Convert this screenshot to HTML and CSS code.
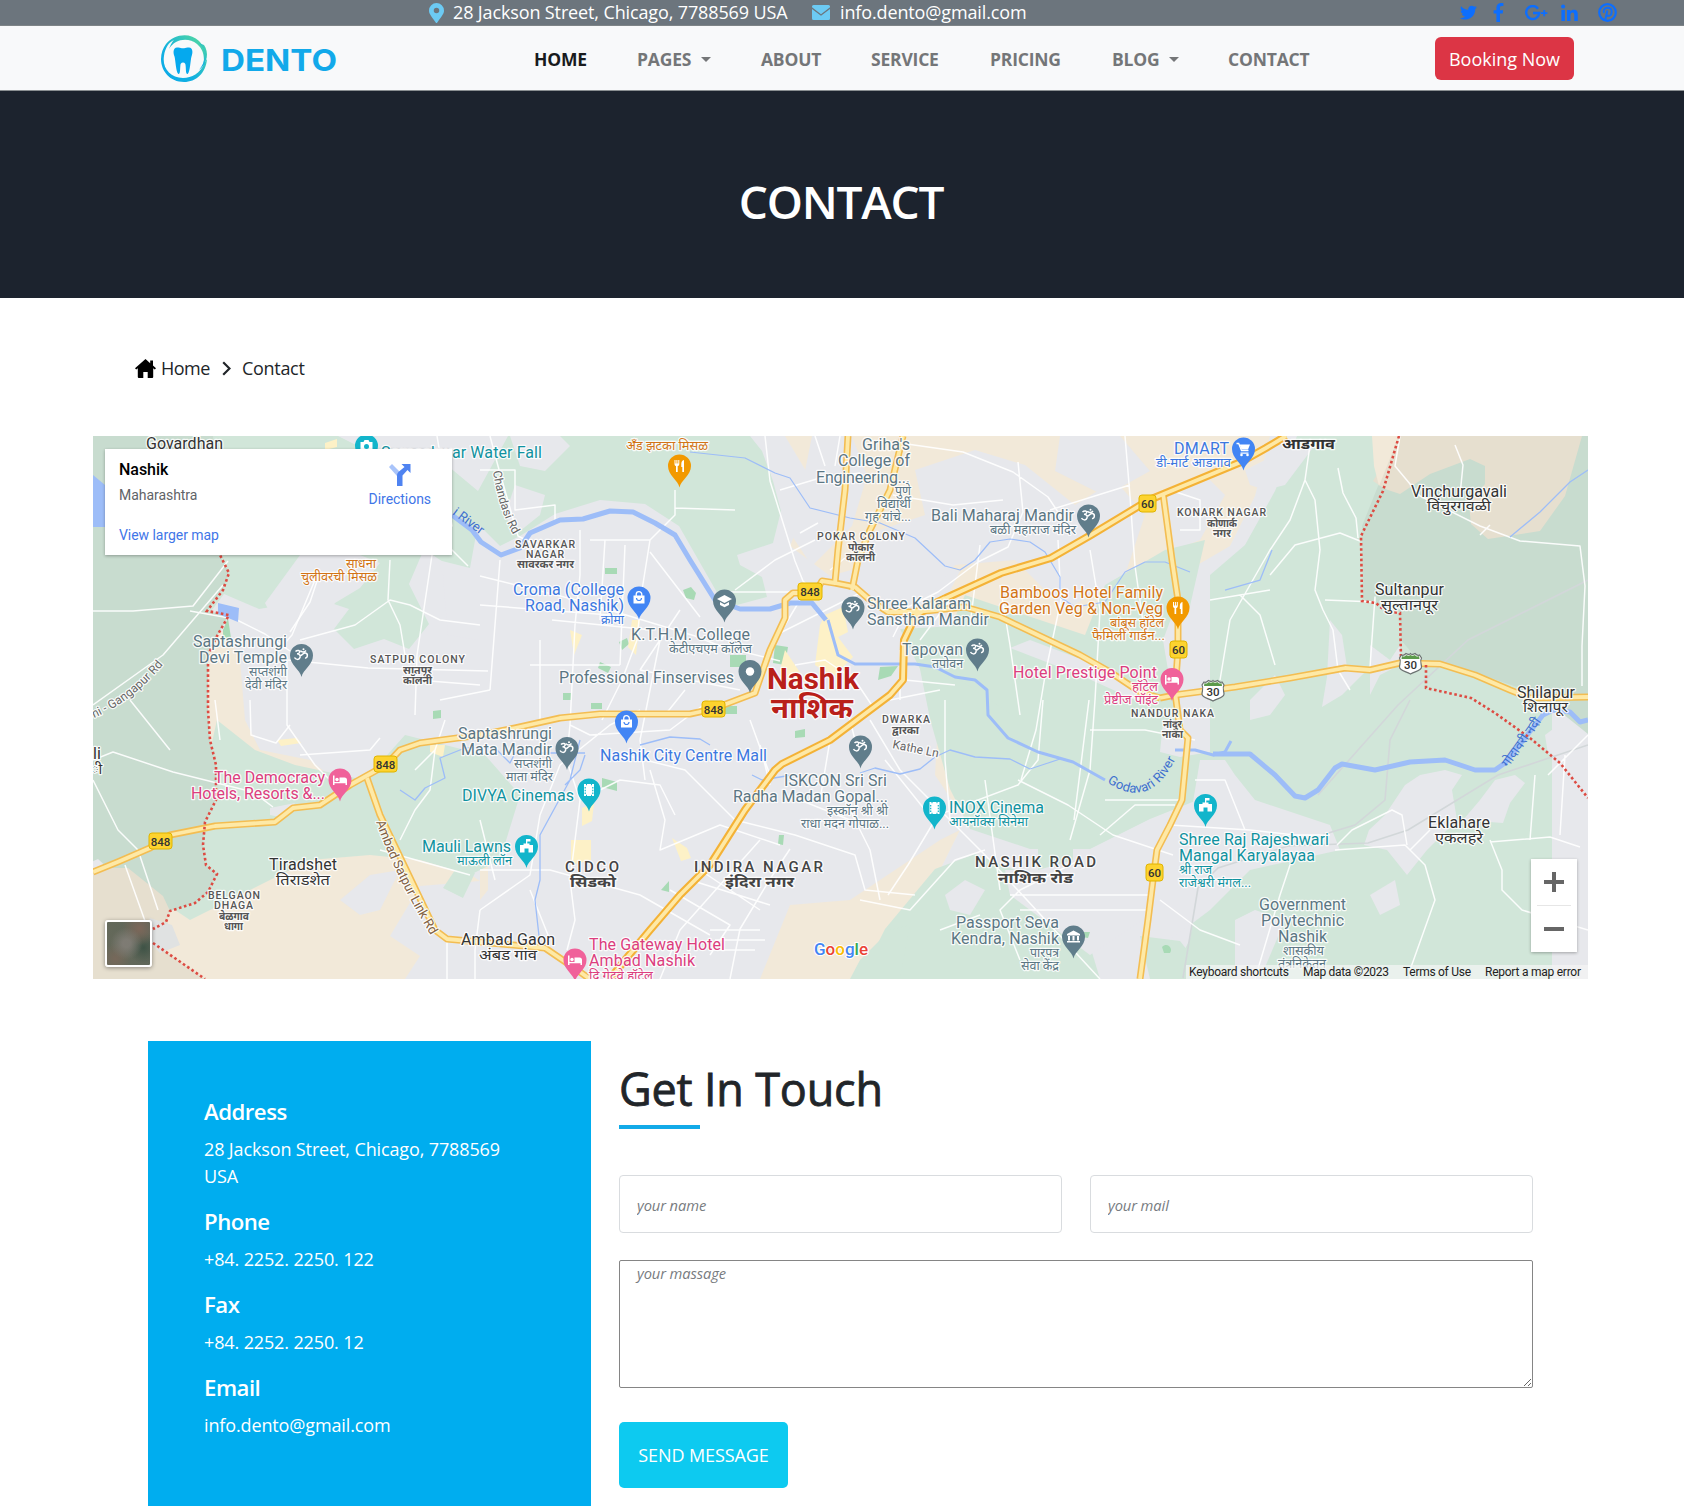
FILE: index.html
```html
<!DOCTYPE html>
<html lang="en">
<head>
<meta charset="utf-8">
<title>Dento - Contact</title>
<link rel="stylesheet" href="styles.css">
</head>
<body>
<header>
  <div class="topbar">
    <div class="topbar-info">
      <svg class="ico-pin" viewBox="0 0 384 512"><path d="M172 502C27 291 0 270 0 192a192 192 0 0 1 384 0c0 78-27 99-172 310a24 24 0 0 1-40 0zM192 262a70 70 0 1 0 0-140 70 70 0 0 0 0 140z"/></svg>
      <span class="addr">28 Jackson Street, Chicago, 7788569 USA</span>
      <svg class="ico-mail" viewBox="0 0 18 15"><path d="M1.500 0h15A1.500 1.500 0 0 1 18 1.500v.8L9 9.200 0 2.300v-.8A1.500 1.500 0 0 1 1.500 0zM0 4l9 6.800L18 4v9.500a1.500 1.500 0 0 1-1.500 1.500h-15A1.500 1.500 0 0 1 0 13.500z"/></svg>
      <span class="mail">info.dento@gmail.com</span>
    </div>
    <div class="social">
      <svg width="17" height="17" viewBox="0 0 512 512"><path d="M459 152c0 5 0 9 0 14 0 139-106 299-299 299-59 0-115-17-161-47 8 1 16 1 25 1 49 0 94-17 130-45-46-1-85-31-98-73 6 1 13 2 20 2 9 0 19-1 28-4-48-10-84-52-84-103v-1c14 8 30 13 47 13-28-19-47-51-47-87 0-19 5-37 14-53 52 64 129 105 216 110-2-8-3-16-3-24 0-58 47-105 105-105 30 0 57 13 77 33 24-5 46-13 67-25-8 24-24 45-46 58 21-2 42-8 60-16-14 21-32 39-52 54z"/></svg>
      <svg width="11" height="19" viewBox="0 0 264 512"><path d="M76 512V283H0v-85h76v-71C76 45 128 0 201 0c35 0 60 3 63 4v80h-44c-40 0-48 19-48 47v67h85l-12 85h-73v229z"/></svg>
      <svg width="23" height="16" viewBox="0 0 23 16"><path d="M13 3.700A6.500 6.500 0 1 0 14.200 8H8" fill="none" stroke="#0d6efd" stroke-width="2.400"/><path d="M18.300 5h1.800v2.200h2.300V9h-2.300v2.200h-1.800V9H16V7.200h2.300z"/></svg>
      <svg width="17" height="18" viewBox="0 0 17 18"><circle cx="2.100" cy="2.600" r="2"/><path d="M.4 6h3.500v11H.4zM6 6h3.300v1.500C10.200 6.200 11.300 5.700 12.800 5.700c3 0 4 2 4 4.800V17h-3.500v-6c0-1.600-.4-2.500-1.700-2.500S9.500 9.500 9.500 11v6H6z"/></svg>
      <svg width="19" height="19" viewBox="0 0 19 19"><circle cx="9.500" cy="9.500" r="8.300" fill="none" stroke="#0d6efd" stroke-width="2.200"/><path d="M7.200 17 9.400 7.500M6 9.900C4.900 7 6.600 4.700 9.600 4.700c2.600 0 4.100 1.600 4.100 3.700 0 2.600-1.400 4.500-3.300 4.500-1.100 0-1.900-.7-1.900-1.700" fill="none" stroke="#0d6efd" stroke-width="1.900"/></svg>
    </div>
  </div>
  <nav class="navbar">
    <svg class="logo" viewBox="0 0 180 48">
      <defs><linearGradient id="ring" x1="1" y1="0" x2="0" y2="1"><stop offset=".15" stop-color="#49d3a9"/><stop offset=".6" stop-color="#12b1e0"/><stop offset="1" stop-color="#09a8ea"/></linearGradient></defs>
      <path fill="url(#ring)" d="M6 9C14-1 30-3 39 6c7 7 8 18 4 26 2-9 1-17-6-23C28 2 15 4 9 14c2-5 3-7 5-9-5 2-9 8-10 16C2 33 10 43 23 43c9 0 17-5 21-14 1-2 2-4 3-5-1 14-11 23-23 23C10 47 1 36 1 24 1 18 3 13 6 9z"/>
      <path fill="url(#ring)" d="M39 8c8 7 7 19 0 27 9-7 10-18 5-25z"/>
      <path fill="#05a9ee" d="M17 12.500c3-.5 4 .7 6 .7s3-1.200 6-.7c4 .5 4 5 2.500 9-1 3-1.300 15-3.800 17.500-2 .5-1.700-4-2-7.500-.1-3-.8-4-2.700-4s-2.600 1-2.700 4c-.3 3.500 0 8-2 7.500C15.800 36.500 15.500 24.500 14.500 21.500c-1.500-4-1.500-8.500 2.500-9z"/>
      <text class="logo-text" x="61" y="36.300" textLength="116" lengthAdjust="spacingAndGlyphs">DENTO</text>
    </svg>
    <ul class="menu">
      <li class="active m-home">HOME</li>
      <li class="m-pages drop">PAGES</li>
      <li class="m-about">ABOUT</li>
      <li class="m-service">SERVICE</li>
      <li class="m-pricing">PRICING</li>
      <li class="m-blog drop">BLOG</li>
      <li class="m-contact">CONTACT</li>
    </ul>
    <button class="booking">Booking Now</button>
  </nav>
</header>
<section class="hero"><h1>CONTACT</h1></section>
<div class="crumbs">
  <svg width="21" height="19" viewBox="0 0 21 19"><path d="M10.500 0 0 9.300l1.200 1.300L2.800 9.300V18a1 1 0 0 0 1 1h4.500v-6h4.400v6h4.500a1 1 0 0 0 1-1V9.300l1.600 1.300L21 9.300l-3-2.700V1.500h-2.800v2.700z"/></svg>
  <span class="c-home">Home</span>
  <svg class="chev" width="9" height="15" viewBox="0 0 9 15"><path d="M1.200 1.200 7.500 7.500l-6.300 6.300" fill="none" stroke="#212529" stroke-width="2.200"/></svg>
  <span class="c-contact">Contact</span>
</div>
<div class="map">
<svg class="map-canvas" viewBox="93 436 1495 543">
<defs>
  <path id="pin" d="M0 21.500C-1.500 14-11.500 9.500-11.500 0a11.500 11.500 0 0 1 23 0C11.500 9.500 1.500 14 0 21.500z"/>
  <g id="om"><use href="#pin" fill="#607d8b"/><path d="M-6-4c2-2 5-1 4 1-.5 1-2 1.300-2.500 1.300C-2-1.500-.7 0-1.500 2-2.500 5-6 4-7 2M-2 0C1 1 1-3 4-2.500S6 3 3.500 2.500M-1-5c1 2 4 2 5.500 0" fill="none" stroke="#fff" stroke-width="1.500"/><circle cx="2" cy="-6.300" r="1" fill="#fff"/></g>
  <g id="food"><use href="#pin" fill="#f29900"/><path d="M-5-6v4c0 1.500 1 2 1.500 2v6h1.700V0c.6 0 1.600-.5 1.600-2v-4h-1v3.500h-.9V-6h-1v3.500H-4V-6zM4.500-6C2.500-5.500 1.800-4 1.800-1.500V1h1v5h1.700z" fill="#fff"/></g>
  <g id="bag"><use href="#pin" fill="#4285f4"/><path d="M-5.500-2.500h11V5.500h-11z" fill="#fff"/><path d="M-2.800-2v-1.500a2.800 2.800 0 0 1 5.600 0V-2" fill="none" stroke="#fff" stroke-width="1.300"/><path d="M-2.500 0a2.500 2.500 0 0 0 5 0" fill="none" stroke="#4285f4" stroke-width="1.200"/></g>
  <g id="bed"><use href="#pin" fill="#f0619a"/><path d="M-7-4.500h1.500V2h5v-4.500H4.500A2.500 2.500 0 0 1 7 0v5H5.500V3.200h-11V5H-7z" fill="#fff"/><circle cx="-3" cy="-.5" r="1.700" fill="#fff"/></g>
  <g id="film"><use href="#pin" fill="#12b5cb"/><path d="M-5-6h2v1.200h1V-6h4v1.200h1V-6h2V6H3V4.800H2V6h-4V4.800h-1V6h-2z" fill="#fff"/><path d="M-3.800-3v7M3.800-3v7" stroke="#12b5cb" stroke-width="1.200" stroke-dasharray="1.500 1.300"/></g>
  <g id="hall"><use href="#pin" fill="#12b5cb"/><path d="M-6.500-1.500h3.500V-3h2.500v-4.500h4.500v2.500H.8v2H3v1.500h3.500V6H2V2h-4v4h-4.500z" fill="#fff"/></g>
  <g id="us30"><path d="M-9-9c2 1 3 0 4.500-1.500C-3-9.500-1-9 0-10.500 1-9 3-9.500 4.500-10.500 6-9 7-8 9-9l2 3c-2 3 0 6 0 9 0 4-6 4-11 7C-5 7-11 7-11 3c0-3 2-6 0-9z" fill="#fff" stroke="#6b7271" stroke-width="1.200"/><path d="M-8.500-8c2 1 3 .5 4-1C-3-8-1-8 0-9 1-8 3-8 4.500-9 5.500-7.500 6.500-7 8.500-8L9-5H-9z" fill="#5b9a4b"/></g>
  <g id="hw">
    <path d="M93 872l27-11 30-13 20-13 45-9 60-4 18-14 27-3 30-20 36-20 14-15 20-7 60-8 35-7 45-10 40-4h90l23-5 42-16 15-43 15-32v-18l8-7h22l7-12 13 2 20 4 15 13 18 12h27l30-14"/>
    <path d="M1163 493l9 67 6 40v50l-3 42 5 38 8 8-6 62-12 25-13 25-4 30-5 40-8 59M1160 698l15-3 60-8 55-9 55-10 25 2 30-7 40 1 35 11 35 15 20 8 58-1M915 612l50-5 35 10 80 38 30 17 30 20 20 6M848 436l-3 54-7 60-3 33M903 436l-13 54-20 40-12 30-6 30M367 778l13 37 55 115 12 9 98 9 25 17 20 14"/>
  </g>
  <path id="hw60" d="M610 979l15-19 25-30 30-35 30-30 35-55 30-40 7-6 48-24 60-45 13-15 1-40 12-25 30-17 55-25 50-15 40-23 58-35 17-7 75-31 25-14 20-12"/>
</defs>
<rect x="93" y="436" width="1495" height="543" fill="#e7e8ec"/>
<!-- farmland -->
<g fill="#f2e9d9">
  <path d="M785 436h485l-15 60-25 50-60 35-40 5-20 45-70 20-60-30-40-10 20-40-60-15-70 20-40-30 25-60z"/>
  <path d="M205 640l20-10 15 30 5 60 15 30 50 10 25 20-10 15h-60l-35 10-30-30-15-50z"/>
  <path d="M93 868h40l35 28 22 14 70-38 70-19 70-4 50 12 30 20-60 5-30 50 30 20-15 23H93z"/>
  <path d="M790 905l60-5 30-20 60-40 20-10-30 60-35 89H760z"/>
  <path d="M940 690l15 5 25 50 5 50-30 10-20-30z"/>
  <path d="M480 865h8v25l-8 10z"/>
  <path d="M405 855l22 8-5 12-25-5z"/>
</g>
<g fill="#e7e8ec">
  <path d="M812 436h40l15 40-15 50-40 40-20-30 10-50z"/>
  <path d="M915 470l60-20 50 15 50 40 40-25 30 35-20 60-60 35-50-50-60 5-50 60-60-10 20-80 60-20z"/>
  <path d="M1165 490l40-15 20 20-25 45-25 10z"/>
  <path d="M1060 436h60l30 35-45 25-50-25z"/>
  <path d="M340 900l30-25 30-5-20 40-20 5z"/>
</g>
<!-- vegetation -->
<g fill="#d1e6d9">
  <path d="M93 436h245l40 20h30l40 10 30 25 30-55h242l12 15 11 30 8 30-8 32-36 12 3 10 22 12 5 20-30 8-18-9-40-70-34-22-45-4-45 14-35 22-20 10-22-22-10 55-44-30-15 35 20 40-20 25-25-10-30 10-20-20 15-20-30-10-60 10-35-15-15 20-20 50-30 100H93z"/>
  <path d="M217 720l38 30 40 15 70 15 40-45 60 15 20 5 35 40-20 65-30 15-50-15-50-5-60 5-30 15-90 45-30-20 30-60z"/>
  <path d="M455 870l20 3-12 25-20-10z"/>
  <path d="M975 625l70 15 60 32 60 30-5 50 20 5 30-5V575l35-30 30-54 22-55h255v543H1170l20-40 10-60 30-30-30-50-50 20-60 30-60 0-60-20-20-40-20-70-10-50-20-40z"/>
  <path d="M965 595l-25 55 20 30 60 40h160v-70l25-110-40 10-60 35-20 50z"/>
  <path d="M885 929l50-60 40-15 50 20 60 55 15 50H860z"/>
  <path d="M1140 936l40 5 30 38h-60z"/>
  <path d="M1038 810h35v50l-35 10z"/>
  <path d="M860 960l30-30 20-5-10 54h-50z"/>
</g>
<g fill="#e7e8ec">
  <path d="M1178 600l15 10 5 80-25 10-10-60z"/>
  <path d="M1030 640l80 30 45 27-15 5-60-27-70-27z"/>
  <path d="M1250 700l25-25 10 20-15 20-20 5z"/>
  <path d="M1330 620l12 15 5 32 20 3-25 25-20 12 5-30z"/>
  <path d="M1370 645l20 15 10-15v20l-20 10-10 20z"/>
  <path d="M1245 470l30-15 15-10 25 0-15 20-15 20-20 5-15-5z"/>
  <path d="M1385 815l20-30 15-10 25-5 17 5-10 15 5 30-30 30-20 25-20-25-23-5 5-15z"/>
  <path d="M1480 800l15-20 20-5 10 8-15 20-7 20-40-3z"/>
  <path d="M1370 895l25-15 5 25-20 10z"/>
  <path d="M1235 920l20-10 30 10-25 59h-25z"/>
  <path d="M1200 760l25 0 10 15 20 25 75 25 10 25-90 20-40 40-40 30z"/>
  <path d="M945 895l20-15 20 10-15 25-20-5z"/>
  <path d="M1005 870l60 0 80 0 5 45-60 40-80-60z"/>
  <path d="M1545 735l20-15 23-6v30l-40 10z"/>
  <path d="M300 555h60l20 8-20 25-25 15-20 30-40-10-10-20z"/>
  <path d="M438 560l40 10v70l-30-5-5-60z"/>
  <path d="M510 436h50l10 10-25 25-25-5z"/>
  <path d="M515 485l30 10-5 20-25 20-10-20z"/>
  <path d="M270 808l25-5-10 15-15-3z"/>
</g>
<!-- land outside the municipal boundary -->
<g fill="#c8dccf">
  <path d="M93 436h120l7 119 9 18-6 17-16 21 22 4-12 21-9 19v55l2 30 6 25v35l-11 22-2 23 3 20 11 9-9 18-13 11-25 8-4 11-13 7 15-5-70-65-40 18z"/>
  <path d="M1400 436h188v298l-50-40-65-22-38-10-17-2-17-20-1-28-37-13-1-73 22-55z"/>
</g>
<path d="M93 868h35l35 28 7 15-4 11-13 7v14l52 36H93z" fill="#e6dfcf"/>
<path d="M150 918l22 7 8 20-20 8-15-15z" fill="#e0e2e2"/>
<path d="M1400 436h182l-17 60-25 35-52 8-17-15-2-20 16-20 0-18-15-7-40 15-30 20-15-5-12-8z" fill="#e6dfcf"/>
<path d="M1372 436h27l-20 50-5-20z" fill="#f2e9d9"/>
<!-- parks and commercial blocks -->
<g fill="#a8dab5"><path d="M605 568h12v6h-12zM683 590l8-3 5 6-2 7-8-2zM730 655h16v12h-16zM775 645l13 2-3 18-12-2zM619 642l8-4 2 6-7 6zM600 662l11 5-3 6-10-5zM563 693h8v7h-8zM591 703h11v6h-11zM602 778l15 4v9l-15-4zM795 731l10-2v8l-10 1zM779 835l5 0-1 10-5-1zM661 890l8-9v11zM433 711l8-1v8l-8 1zM1162 947a5 5 0 0 1 8 6h-6zM880 667l18-1-7 10-13 4zM223 630l5-12 3 20-8 4zM725 706h12v8h-12zM1082 932l8 0-2 6-6-1z"/></g>
<g fill="#fdf1c7"><path d="M570 630l12 5-8 20zM825 615l18-8 5 25-10 5 15 20-20 20-18-12 5-40zM582 808l12-5-2 18-10 5zM571 840l20 0 0 20-20 5zM672 838l15 10 4 10-10 3zM632 620h8l-4 35-8-8zM785 650l20 30-10 10-15-20zM277 740l20-2 4 5-20 3zM430 745l15 0-2 12-13-5zM325 443l12-4v8l-12 3z"/></g>
<!-- railway -->
<path d="M1588 745l-90 30-90 55-40 13-80 3-70 22-20 20-15 90M1410 700l-20 40-5 60-30 25-60 18M1588 580l-120 60-70 65-80 90" fill="none" stroke="#d2d7d9" stroke-width="1.600"/>
<!-- minor roads -->
<g class="minor">
  <path d="M93 611h40l60-5 35-45M93 705l70-50 60-70M270 660l22-25 25-60M93 760l20-8 60 20 80 20 20 15M190 611l45 8 30 15 25 17M287 660v65l28 40 25 25"/>
  <path d="M290 632l20-30 10-30M288 660l80 8 120 3M300 640l55-15 35-25 20 5 30 15 40 5M390 560l-2 40 12 25 5 30M220 740l-5-40M250 700l1 35 25 8 14-18M300 755l70-5 10-12"/>
  <path d="M415 715l2-60 15-100 10-20M417 680l63 5M440 700l50-10M437 436l15 90-12 10M490 436l8 30 20 70 30 15M468 566l-20-20-15-10M480 470h35v40l40-5v15"/>
  <path d="M675 490v25l-25 25-8 50-5 50-15 40-20 40M675 508l60 2M580 530v45l-5 50-5 100-4 40M480 576l100 25 115 35 25 10 60 15M480 605l130 10M590 540h60M605 540l-5 80M625 545l-5 120M650 552l50 65M552 620l100 10M530 665h90M540 640v85M640 670l100 20M660 640l-20 100M680 610l-40 60M500 560l-10 130"/>
  <path d="M765 436l5 45 25 80 8 20 12 12M780 490l40-12 40-5M735 590l40-30 40-20M720 592h95M800 533l18-10M840 436l-5 30M815 436l10 30M830 570l15-12M780 633l40-20 40-20M800 600l-30 50M795 665l30-5 30 20 20 30"/>
  <path d="M893 442l70 10 50 20 35 25 20 30M1018 462l5 50-15 35-30 15-40 30-30 15-15 30M893 495l60 10 50-5M1058 540l3 60-15 70-10 60-15 50M1090 550l10 60-5 90-5 70-20 70M980 545l-10 80M1125 436l5 60 5 70 10 70M1050 510l80-25M1170 490l30 10v30h-20M950 600l-30 40"/>
  <path d="M1310 445l-5 35 10 20 5 50-5 40 8 20 10 20 5 40 12 20M1305 480l-15 40-20 30-40 70-10 60M1338 468l5 25 13 25 2 20M1270 575l25-30 45-12 20 8M1325 600l50 2v-5l-5 70M1240 595l20 20 15 50M1210 600l60-10"/>
  <path d="M1400 436l-5 30 25 30 60 30 40 15 60 5 5 40-3 60v40M1455 445l8 20-3 30M1490 525l-10 10"/>
  <path d="M565 755l15 45-10 80 5 40-8 30M480 910l50-35 10-60 20-50 50-40 30-15M480 870l70 0 90 25 70 40M625 755l60 15 50 50 60 15 60 20 10 35 50 5M570 725l20 10 80-5 40-30M650 770l15 50-5 30 60-25 60 20M640 740l5 40M530 890l20 50M580 800l40-20 40 5 15 30M760 840l-80 90-20 49M730 979l10-50 30-50 20-30M690 880l80 25M670 890l60 35-20 30M700 870l60 40M710 930h50M715 940h50M710 950h45"/>
  <path d="M870 720l30 50 90 90 110 119M945 700v60l5 60M1020 715l-10-70-10-60M1043 700l-5 60-20 25-80 30-30 50-20 30M1018 780l50 25 45 30 60 20M1089 700l-10 80-5 40M885 760l40 50M1080 860l-60 30-20 20 20 50M1010 895h140M1020 910h130M860 900l50 10 45-50 30-10M985 780l15 110M940 930l40-15M1100 835l35-30 40 0M1090 730h55l50 10M1105 800h80"/>
  <path d="M760 745l10 40M480 820l15 60M665 715l20-25M750 720l20 55M830 740l-10 60M840 790l30 60 10 50M800 800l50 20M845 700l10 40M890 700l50-10M900 650v50M905 680l50 5"/>
  <path d="M1170 825l80 5 45 5 35 0M1290 865l-10 30-25 84M1335 850l70-5 20 20 10 35-25 70v39M1337 845l15-15 40-20 10 5 5 30M1430 830l-20 20M1490 840l12 30 0 20 20 20 66 20M1490 842l60-5 30 10M1535 775l-5 65M1565 755l-5 80M1588 735l-40 40M1160 900l40 30 40 15M1195 780l30 0 20 50"/>
  <path d="M93 780l25 50 20 20 20 60M125 865l25 70M447 939v40M130 700l40 50M475 990v-40l5-40M415 770l20-20 10-30M400 840l15-30 15-20 5-40M380 850l90 25"/>
</g>
<!-- water -->
<g class="water">
  <path d="M452 515l20 15 9 12 20 13 19-7 10-15 30-13 23-1 27-8 23 1 22 11 20 12 15 25 25 40 25 9h30l20-6h22l14 17" stroke-width="5"/>
  <path d="M828 620l10 35 17 9h60l20 3 20 10 20 3 12 10 1 25 20 23 30 14 35 10 32 18 M1175 750h20l18 5 12-3 6-11" stroke-width="3"/>
  <path d="M1213 754l37 0 25 21 20 21 10 2 13-8 17-22 7-4 33 6 35-8 35-2 30 10h20l10-7 38-48 10-5 17 2 10 10 8-2" stroke-width="5"/>
  <path d="M690 452l55 6 30 15 15 5 20 30 40 10 30 5 35 15 30 28 15 4 15-10 15-18 20-3 20 3 15 10 15 25v20l15 10 30-5 20-30 20-10h20l25 10" stroke-width="1.200"/>
  <path d="M860 773l15-5 25 6 20-5 15-12 15-7 25 7 35 2 20 10 15-5 15-5M400 790l15 10 10-12 20-10-5-20 25-10 30 0 15 15 5-10h70M565 785l15-15 5-15M580 740l-10 40-30 55 0 45 -5 20 5 45M640 745l30-8 30 2 10 6M752 775l10 5 30-5M1588 470l-18 12-30 30-30 25M1225 590l35-10 12-30" stroke-width="1.300"/>
</g>
<path d="M93 475l12 10v42H93zM218 603l21 5-1 14-20-8z" fill="#9dbdf8"/>
<!-- highways -->
<use href="#hw" class="hw-case"/><use href="#hw60" class="hw-case wide"/>
<use href="#hw" class="hw-fill"/><use href="#hw60" class="hw-fill"/>
<!-- municipal boundary -->
<path class="boundary" d="M220 540v15l9 18-6 17-16 21 22 4-12 21-9 19v55l2 30 6 25v35l-11 22-2 23 3 20 11 9-9 18-13 11-25 8-4 11-13 7M153 943l52 36M1399 436l-16 55-22 45 1 65 14 2 9 8 15 2 1 46M1426 665v23l45 10 24 15 35 25 30 25 28 35"/>
<!-- route shields -->
<g class="shield">
  <rect x="374" y="756" width="23" height="16" rx="3"/><rect x="149" y="833" width="23" height="16" rx="3"/><rect x="702" y="701" width="23" height="16" rx="3"/><rect x="798" y="583" width="24" height="17" rx="3"/><rect x="1139" y="495" width="17" height="17" rx="3"/><rect x="1170" y="641" width="17" height="17" rx="3"/><rect x="1146" y="864" width="17" height="17" rx="3"/>
</g>
<use href="#us30" x="1213" y="691"/><use href="#us30" x="1410.500" y="664"/>
<g class="route">
  <text x="385.500" y="768.500">848</text><text x="160.500" y="845.500">848</text><text x="713.500" y="713.500">848</text><text x="810" y="596">848</text><text x="1147.500" y="508">60</text><text x="1178.500" y="654">60</text><text x="1154.500" y="877">60</text><text x="1213" y="696">30</text><text x="1410.500" y="669">30</text>
</g>
<!-- pins -->
<use href="#om" x="301.500" y="655.500"/><use href="#om" x="853" y="608"/><use href="#om" x="1088.500" y="516"/><use href="#om" x="977.500" y="650"/><use href="#om" x="567" y="748.500"/><use href="#om" x="860.500" y="747"/>
<use href="#food" x="679.500" y="466"/><use href="#food" x="1178" y="608"/>
<use href="#bag" x="639" y="598"/><use href="#bag" x="626.500" y="722"/>
<use href="#bed" x="1172" y="679.500"/><use href="#bed" x="340" y="780"/><use href="#bed" x="575" y="960"/>
<use href="#film" x="589" y="790"/><use href="#film" x="934.500" y="808"/>
<use href="#hall" x="526.500" y="846.500"/><use href="#hall" x="1205.500" y="805.500"/>
<g transform="translate(724.500 601)"><use href="#pin" fill="#607d8b"/><path d="M-7.500-2 0-6l7.500 4L0 2zM-4.500 1 0 3.400 4.500 1v3L0 6.300-4.500 4z" fill="#fff"/></g>
<g transform="translate(750 671.500)"><use href="#pin" fill="#607d8b"/><circle r="4.200" fill="#fff"/></g>
<g transform="translate(1243.500 449)"><use href="#pin" fill="#4285f4"/><path d="M-7-5.500h2.200L-2 1.500H5M-3 4.200h8" fill="none" stroke="#fff" stroke-width="1.300"/><path d="M-4-4.500H6.500L4.500.5h-6.500z" fill="#fff"/><circle cx="-2" cy="6" r="1.300" fill="#fff"/><circle cx="4" cy="6" r="1.300" fill="#fff"/></g>
<g transform="translate(1073.500 937)"><use href="#pin" fill="#607d8b"/><path d="M-6.500-3 0-6.500 6.500-3v1.500h-13zM-5.500-1h2v4.500h-2zM-1-1h2v4.500h-2zM3.500-1h2v4.500h-2zM-6.500 4h13v1.500h-13z" fill="#fff"/></g>
<g transform="translate(366.500 446)"><use href="#pin" fill="#12b5cb"/><path d="M-6-4h3l1-2h4l1 2h3V5H-6z" fill="#fff"/><circle cy=".5" r="2.500" fill="#12b5cb"/></g>
<!-- labels -->
<g class="lbl poi">
  <text x="193" y="647" textLength="94">Saptashrungi</text><text x="199" y="663" textLength="88">Devi Temple</text><text class="hi" x="249" y="676" textLength="38" lengthAdjust="spacingAndGlyphs">सप्तशंगी</text><text class="hi" x="245" y="689" textLength="42" lengthAdjust="spacingAndGlyphs">देवी मंदिर</text>
  <text x="631" y="640" textLength="119">K.T.H.M. College</text><text class="hi" x="669" y="653" textLength="83" lengthAdjust="spacingAndGlyphs">केटीएचएम कॉलेज</text>
  <text x="559" y="683" textLength="175">Professional Finservises</text>
  <text x="862" y="450" textLength="48">Griha's</text><text x="838" y="466" textLength="72">College of</text><text x="816" y="482.500" textLength="94">Engineering...</text><text class="hi" x="895" y="495" textLength="16" lengthAdjust="spacingAndGlyphs">पुणे</text><text class="hi" x="877" y="508" textLength="34" lengthAdjust="spacingAndGlyphs">विद्यार्थी</text><text class="hi" x="865" y="521" textLength="46" lengthAdjust="spacingAndGlyphs">गृह यांचे...</text>
  <text x="931" y="521" textLength="143">Bali Maharaj Mandir</text><text class="hi" x="990" y="534" textLength="86" lengthAdjust="spacingAndGlyphs">बळी महाराज मंदिर</text>
  <text x="867" y="609" textLength="104">Shree Kalaram</text><text x="867" y="625" textLength="122">Sansthan Mandir</text>
  <text x="902" y="655" textLength="61">Tapovan</text><text class="hi" x="932" y="668" textLength="31" lengthAdjust="spacingAndGlyphs">तपोवन</text>
  <text x="458" y="739" textLength="94">Saptashrungi</text><text x="461" y="755" textLength="91">Mata Mandir</text><text class="hi" x="514" y="768" textLength="38" lengthAdjust="spacingAndGlyphs">सप्तशंगी</text><text class="hi" x="506" y="781" textLength="47" lengthAdjust="spacingAndGlyphs">माता मंदिर</text>
  <text x="784" y="786" textLength="103">ISKCON Sri Sri</text><text x="733" y="802" textLength="155">Radha Madan Gopal...</text><text class="hi" x="827" y="815" textLength="61" lengthAdjust="spacingAndGlyphs">इस्कॉन श्री श्री</text><text class="hi" x="801" y="828" textLength="88" lengthAdjust="spacingAndGlyphs">राधा मदन गोपाळ...</text>
  <text x="956" y="928" textLength="103">Passport Seva</text><text x="951" y="944" textLength="108">Kendra, Nashik</text><text class="hi" x="1030" y="957" textLength="29" lengthAdjust="spacingAndGlyphs">पारपत्र</text><text class="hi" x="1021" y="970" textLength="38" lengthAdjust="spacingAndGlyphs">सेवा केंद्र</text>
  <text x="1259" y="910" textLength="87">Government</text><text x="1261" y="926" textLength="83">Polytechnic</text><text x="1278" y="942" textLength="49">Nashik</text><text class="hi" x="1283" y="955" textLength="41" lengthAdjust="spacingAndGlyphs">शासकीय</text><text class="hi" x="1278" y="968" textLength="48" lengthAdjust="spacingAndGlyphs">तंत्रनिकेतन</text>
</g>
<g class="lbl shop">
  <text x="513" y="595" textLength="111">Croma (College</text><text x="525" y="611" textLength="99">Road, Nashik)</text><text class="hi" x="601" y="624" textLength="23" lengthAdjust="spacingAndGlyphs">क्रोमा</text>
  <text x="600" y="761" textLength="167">Nashik City Centre Mall</text><text x="1174" y="454" textLength="55">DMART</text><text class="hi" x="1156" y="467" textLength="75" lengthAdjust="spacingAndGlyphs">डी-मार्ट आडगाव</text>
</g>
<g class="lbl fun">
  <text x="381" y="457.500" textLength="161">Someshwar Water Fall</text>
  <text x="462" y="801" textLength="112">DIVYA Cinemas</text><text x="422" y="852" textLength="89">Mauli Lawns</text><text class="hi" x="457" y="865" textLength="55" lengthAdjust="spacingAndGlyphs">माऊली लॉन</text>
  <text x="949" y="813" textLength="95">INOX Cinema</text><text class="hi" x="949" y="826" textLength="79" lengthAdjust="spacingAndGlyphs">आयनॉक्स सिनेमा</text>
  <text x="1179" y="845" textLength="150">Shree Raj Rajeshwari</text><text x="1179" y="861" textLength="136">Mangal Karyalayaa</text><text class="hi" x="1179" y="874" textLength="33" lengthAdjust="spacingAndGlyphs">श्री राज</text><text class="hi" x="1179" y="887" textLength="72" lengthAdjust="spacingAndGlyphs">राजेश्वरी मंगल...</text>
</g>
<g class="lbl eat">
  <text class="hi" x="626" y="449.500" textLength="82" lengthAdjust="spacingAndGlyphs">अँड झटका मिसळ</text><text class="hi" x="346" y="568" textLength="30" lengthAdjust="spacingAndGlyphs">साधना</text><text class="hi" x="301" y="581" textLength="76" lengthAdjust="spacingAndGlyphs">चुलीवरची मिसळ</text>
  <text x="1000" y="598" textLength="163">Bamboos Hotel Family</text><text x="999" y="614" textLength="164">Garden Veg &amp; Non-Veg</text><text class="hi" x="1110" y="627" textLength="54" lengthAdjust="spacingAndGlyphs">बांबूस हॉटेल</text><text class="hi" x="1092" y="640" textLength="73" lengthAdjust="spacingAndGlyphs">फैमिली गार्डन...</text>
</g>
<g class="lbl stay">
  <text x="1013" y="678" textLength="144">Hotel Prestige Point</text><text class="hi" x="1132" y="690.500" textLength="26" lengthAdjust="spacingAndGlyphs">हॉटेल</text><text class="hi" x="1104" y="704" textLength="54" lengthAdjust="spacingAndGlyphs">प्रेष्टीज पॉइंट</text>
  <text x="214" y="783" textLength="111">The Democracy</text><text x="191" y="799" textLength="134">Hotels, Resorts &amp;...</text>
  <text x="589" y="950" textLength="136">The Gateway Hotel</text><text x="589" y="966" textLength="106">Ambad Nashik</text><text class="hi" x="589" y="980" textLength="64" lengthAdjust="spacingAndGlyphs">दि गेटवे हॉटेल</text>
</g>
<g class="lbl town">
  <text x="146" y="448.500" textLength="77">Govardhan</text><text x="269" y="870" textLength="68">Tiradshet</text><text class="hi" x="276" y="885" textLength="54" lengthAdjust="spacingAndGlyphs">तिराडशेत</text>
  <text x="461" y="945" textLength="94">Ambad Gaon</text><text class="hi" x="479" y="960" textLength="58" lengthAdjust="spacingAndGlyphs">अंबड गांव</text>
  <text class="hi bold" x="1282" y="449" textLength="53" lengthAdjust="spacingAndGlyphs">आडगाव</text>
  <text x="1411" y="496.500" textLength="96">Vinchurgavali</text><text class="hi" x="1427" y="511" textLength="64" lengthAdjust="spacingAndGlyphs">विंचुरगवळी</text>
  <text x="1375" y="595" textLength="69">Sultanpur</text><text class="hi" x="1381" y="610" textLength="57" lengthAdjust="spacingAndGlyphs">सुल्तानपूर</text>
  <text x="1517" y="698" textLength="58">Shilapur</text><text class="hi" x="1523" y="712" textLength="45" lengthAdjust="spacingAndGlyphs">शिलापूर</text>
  <text x="1428" y="828" textLength="62">Eklahare</text><text class="hi" x="1435" y="843" textLength="48" lengthAdjust="spacingAndGlyphs">एकलहरे</text>
  <text x="93" y="759">li</text><text class="hi" x="91" y="774">ी</text>
</g>
<g class="lbl hood">
  <text x="370" y="663" textLength="95">SATPUR COLONY</text><text class="hi" x="403" y="674" textLength="29" lengthAdjust="spacingAndGlyphs">सातपूर</text><text class="hi" x="403" y="684" textLength="29" lengthAdjust="spacingAndGlyphs">कॉलनी</text>
  <text x="515" y="547.500" textLength="60">SAVARKAR</text><text x="526" y="558" textLength="38">NAGAR</text><text class="hi" x="517" y="568" textLength="57" lengthAdjust="spacingAndGlyphs">सावरकर नगर</text>
  <text x="817" y="540" textLength="88">POKAR COLONY</text><text class="hi" x="848" y="550.500" textLength="26" lengthAdjust="spacingAndGlyphs">पोकार</text><text class="hi" x="846" y="561" textLength="29" lengthAdjust="spacingAndGlyphs">कॉलनी</text>
  <text x="1177" y="516" textLength="89">KONARK NAGAR</text><text class="hi" x="1207" y="527" textLength="30" lengthAdjust="spacingAndGlyphs">कोणार्क</text><text class="hi" x="1213" y="537" textLength="18" lengthAdjust="spacingAndGlyphs">नगर</text>
  <text x="882" y="723" textLength="48">DWARKA</text><text class="hi" x="892" y="734" textLength="27" lengthAdjust="spacingAndGlyphs">द्वारका</text>
  <text x="1131" y="717" textLength="83">NANDUR NAKA</text><text class="hi" x="1163" y="728" textLength="19" lengthAdjust="spacingAndGlyphs">नांदुर</text><text class="hi" x="1162" y="738" textLength="21" lengthAdjust="spacingAndGlyphs">नाका</text>
  <text x="208" y="899" textLength="52">BELGAON</text><text x="214" y="909" textLength="39">DHAGA</text><text class="hi" x="219" y="920" textLength="30" lengthAdjust="spacingAndGlyphs">बेळगाव</text><text class="hi" x="224" y="930" textLength="19" lengthAdjust="spacingAndGlyphs">धागा</text>
</g>
<g class="lbl area">
  <text x="565" y="872" textLength="54">CIDCO</text><text class="hi" x="570" y="887" textLength="46" lengthAdjust="spacingAndGlyphs">सिडको</text>
  <text x="694" y="871.500" textLength="129">INDIRA NAGAR</text><text class="hi" x="725" y="887" textLength="69" lengthAdjust="spacingAndGlyphs">इंदिरा नगर</text>
  <text x="975" y="867" textLength="121">NASHIK ROAD</text><text class="hi" x="998" y="883" textLength="75" lengthAdjust="spacingAndGlyphs">नाशिक रोड</text>
</g>
<g class="lbl city"><text x="767" y="689" textLength="92" lengthAdjust="spacingAndGlyphs">Nashik</text><text class="hi" x="771" y="718" textLength="82" lengthAdjust="spacingAndGlyphs">नाशिक</text></g>
<g class="lbl road">
  <path id="r1" d="M94 718Q135 700 166 661" fill="none" stroke="none"/><text><textPath href="#r1">ni - Gangapur Rd</textPath></text>
  <path id="r2" d="M493 471Q499 510 513 534" fill="none" stroke="none"/><text><textPath href="#r2">Chandasi Rd</textPath></text>
  <path id="r3" d="M892 748l44 9" fill="none" stroke="none"/><text><textPath href="#r3">Kathe Ln</textPath></text>
  <path id="r4" d="M376 822Q395 875 430 934" fill="none" stroke="none"/><text class="brown"><textPath href="#r4" textLength="126">Ambad Satpur Link Rd</textPath></text>
  <path id="r5" d="M1107 782Q1150 812 1176 758" fill="none" stroke="none"/><text class="blue"><textPath href="#r5" textLength="86">Godavari River</textPath></text>
  <path id="r6" d="M1508 768l33-46" fill="none" stroke="none"/><text class="blue"><textPath href="#r6">गोदावरी नदी</textPath></text>
  <path id="r7" d="M452 514l30 22" fill="none" stroke="none"/><text class="blue"><textPath href="#r7">i River</textPath></text>
</g>
<text class="google" x="814" y="955" textLength="54"><tspan fill="#4285f4">G</tspan><tspan fill="#ea4335">o</tspan><tspan fill="#fbbc04">o</tspan><tspan fill="#4285f4">g</tspan><tspan fill="#34a853">l</tspan><tspan fill="#ea4335">e</tspan></text>
<rect x="1186" y="965" width="402" height="14" fill="#f5f5f5" opacity=".7"/>
<g class="legal"><text x="1189" y="976" textLength="100">Keyboard shortcuts</text><text x="1303" y="976" textLength="86">Map data ©2023</text><text x="1403" y="976" textLength="68">Terms of Use</text><text x="1485" y="976" textLength="96">Report a map error</text></g>
</svg>
<div class="place-card">
  <div class="place"><b>Nashik</b><span>Maharashtra</span><a>View larger map</a></div>
  <div class="directions">
    <svg width="22" height="22" viewBox="0 0 22 22"><path d="M0 3 3 0l8 8-3 4z" fill="#a9c4fa"/><path d="M12.500 0H21.500v9l-3-3-5 5.500V22h-5.500V12c0-2 .5-3 2-4.500L15.500 3z" fill="#4f83f1"/></svg>
    <a>Directions</a>
  </div>
</div>
<div class="satellite"></div>
<div class="zoom"><i class="plus"></i><i class="minus"></i></div>
</div>
<main class="contact">
  <aside class="info">
    <h5>Address</h5><p>28 Jackson Street, Chicago, 7788569<br>USA</p>
    <h5>Phone</h5><p>+84. 2252. 2250. 122</p>
    <h5>Fax</h5><p>+84. 2252. 2250. 12</p>
    <h5>Email</h5><p>info.dento@gmail.com</p>
  </aside>
  <form class="touch">
    <h2>Get In Touch</h2>
    <div class="rule"></div>
    <div class="row"><input placeholder="your name"><input placeholder="your mail"></div>
    <textarea placeholder="your massage"></textarea>
    <button type="button" class="send">SEND MESSAGE</button>
  </form>
</main>
</body>
</html>
```
FILE: styles.css
```css
* { box-sizing: border-box; }
html { overflow: hidden; }
body { margin: 0; height: 1506px; overflow: hidden; background: #fff; color: #212529; font: 18px/27.6px "Open Sans", "Noto Sans", sans-serif; letter-spacing: -.13px; }
svg { display: block; flex: none; letter-spacing: 0; }

.topbar { height: 26px; background: #6c757d; border-bottom: 1px solid #7e8487; display: flex; align-items: center; padding: 0 67px 0 429px; }
.topbar-info { display: flex; align-items: center; color: #fff; white-space: nowrap; }
.topbar-info span { padding-top: 1px; }
.ico-pin { width: 15px; height: 20px; fill: #6ccaf3; margin-right: 9px; }
.addr { width: 359px; }
.ico-mail { width: 18px; height: 15px; fill: #6ccaf3; margin-right: 10px; }
.social { margin-left: auto; display: flex; align-items: center; fill: #0d6efd; }
.social svg:nth-child(2) { margin-left: 16px; }
.social svg:nth-child(3) { margin-left: 21px; }
.social svg:nth-child(4) { margin-left: 13px; }
.social svg:nth-child(5) { margin-left: 20px; }

.navbar { height: 65px; background: #f8f9fa; border-bottom: 1px solid #8a8f92; display: flex; align-items: center; padding: 1px 110px 0 160px; }
.logo { width: 180px; height: 48px; }
.logo-text { font: 700 30px Inter, sans-serif; fill: #12a9ea; }
.menu { list-style: none; margin: 2px 0 0 194px; padding: 0; display: flex; font-weight: 700; font-size: 17.500px; color: #747678; letter-spacing: -.2px; white-space: nowrap; }
.menu li { display: flex; align-items: center; }
.menu .active { color: #191b1d; }
.drop::after { content: ""; margin-left: 10px; border: 5.500px solid transparent; border-top-color: currentColor; border-bottom: 0; }
.m-home { width: 103px; }
.m-pages { width: 124px; }
.m-about { width: 110px; }
.m-service { width: 119px; }
.m-pricing { width: 122px; }
.m-blog { width: 116px; }
.booking { margin-left: auto; width: 139px; height: 43px; padding: 2px 0 0; border: 0; border-radius: 6px; background: #dc3545; color: #fff; font: inherit; letter-spacing: 0; }

.hero { height: 207px; background: #1c232e; display: flex; align-items: center; justify-content: center; padding-top: 14px; }
.hero h1 { margin: 0 0 0 -2px; color: #fff; font-size: 46px; font-weight: 600; letter-spacing: -1.200px; }

.crumbs { height: 138px; padding: 2px 0 0 135px; display: flex; align-items: center; color: #212529; }
.crumbs span { padding-top: 1px; }
.c-home { width: 61px; margin-left: 5px; letter-spacing: -.5px; }
.chev { margin-right: 11px; }
.c-contact { letter-spacing: -.3px; }

.map { position: relative; margin: 0 0 0 93px; width: 1495px; height: 543px; overflow: hidden; }
.map-canvas { width: 1495px; height: 543px; }
.minor path { fill: none; stroke: #fff; stroke-width: 1.500; stroke-linejoin: round; opacity: .9; }
.water path { fill: none; stroke: #9dbdf8; stroke-linejoin: round; }
.hw-case { fill: none; stroke: #f3bd52; stroke-width: 7; stroke-linejoin: round; }
.hw-case.wide { stroke: #f4b236; stroke-width: 8; }
.hw-fill { fill: none; stroke: #fee9a6; stroke-width: 3.800; stroke-linejoin: round; }
.boundary { fill: none; stroke: #dd4b42; stroke-width: 2.600; stroke-dasharray: 2.600 2.600; }
.shield rect { fill: #fdd32f; stroke: #e0b400; stroke-width: 1; }
.route text { font: 500 11.500px Roboto, sans-serif; text-anchor: middle; fill: #333; }
.lbl text { font-family: Roboto, "Noto Sans Devanagari", "Noto Sans", FreeSans, sans-serif; font-size: 16px; paint-order: stroke; stroke: #fff; stroke-width: 2.500px; stroke-linejoin: round; stroke-opacity: .85; }
.lbl .hi { font-size: 13px; }
.poi text { fill: #5b7683; }
.shop text { fill: #3c78e0; }
.fun text { fill: #10929f; }
.eat text { fill: #d27416; }
.stay text { fill: #dc3e7e; }
.town text { fill: #333; }
.town .hi { font-size: 14.500px; }
.town .bold, .hood .hi, .area .hi { font-weight: 700; }
.hood text { font-size: 10.500px; font-weight: 500; fill: #555; }
.hood .hi { font-size: 10.500px; }
.area text { font-size: 15px; font-weight: 500; fill: #444; }
.area .hi { font-size: 15px; }
.city text, .city .hi { font-size: 29px; font-weight: 700; fill: #b9201a; }
.road text { font-size: 12px; fill: #666; }
.road .brown { fill: #806043; font-size: 13px; }
.road .blue { fill: #3e70cf; font-size: 13px; stroke: none; }
.google { font: 500 17px Roboto, sans-serif; paint-order: stroke; stroke: #fff; stroke-width: 2px; }
.legal text { font: 12px Roboto, sans-serif; fill: #222; }

.place-card { position: absolute; left: 12px; top: 13px; width: 347px; height: 106px; background: #fff; box-shadow: 0 1px 3px rgba(0, 0, 0, .3); display: flex; justify-content: space-between; padding: 11px 21px 0 14px; font: 14.500px/20px Roboto, sans-serif; letter-spacing: -.05px; }
.place { display: flex; flex-direction: column; }
.place b { font-size: 16px; font-weight: 500; color: #000; }
.place span { margin-top: 5px; font-size: 14px; color: #5f6368; }
.place a { margin-top: 20px; }
.place-card a { color: #3f76e8; font-size: 14px; }
.directions { display: flex; flex-direction: column; align-items: center; padding-top: 4px; gap: 3px; }
.satellite { position: absolute; left: 12px; top: 484px; width: 47px; height: 47px; border: 2px solid #fff; border-radius: 3px; box-shadow: 0 1px 4px rgba(0, 0, 0, .4); background: radial-gradient(circle at 45% 50%, #85807acc 0 12%, transparent 50%), radial-gradient(circle at 75% 15%, #7d6759, transparent 35%), radial-gradient(circle at 20% 85%, #77685a, transparent 30%), radial-gradient(circle at 85% 60%, #3f5346, transparent 35%), linear-gradient(70deg, #66695a, #5d6659); }
.zoom { position: absolute; left: 1438px; top: 423px; width: 46px; height: 93px; background: linear-gradient(#e6e6e6, #e6e6e6) 6px 46px / 34px 1px no-repeat #fff; box-shadow: 0 1px 3px rgba(0, 0, 0, .3); display: flex; flex-direction: column; align-items: center; padding-top: 13px; gap: 23px; }
.zoom i { width: 20px; height: 20px; background: linear-gradient(#666, #666) center / 20px 4px no-repeat; }
.zoom .plus { background: linear-gradient(#666, #666) center / 20px 4px no-repeat, linear-gradient(#666, #666) center / 4px 20px no-repeat; }
.zoom .minus { margin-top: 4px; }

.contact { display: flex; padding: 62px 151px 0 148px; gap: 28px; }
.info { width: 443px; height: 520px; background: #00adef; color: #fff; padding: 57px 56px 0; }
.info h5 { margin: 0 0 9.200px; font-size: 22.200px; line-height: 27.600px; font-weight: 600; letter-spacing: -.5px; }
.info p { margin: 0 0 18.400px; white-space: nowrap; position: relative; top: 1px; }
.touch { flex: 1; padding-top: 19px; }
.touch h2 { margin: 0; font-size: 45px; line-height: 58px; font-weight: 500; letter-spacing: -.2px; -webkit-text-stroke: .8px #212529; }
.rule { width: 81px; height: 4px; margin-top: 7px; background: #12aae8; }
.row { display: flex; gap: 28px; margin-top: 46px; }
input, textarea { font: italic 14.700px "Open Sans", sans-serif; outline: 0; background: #fff; }
input { flex: 1; min-width: 0; height: 58px; border: 1px solid #d9dcdf; border-radius: 4px; padding: 1px 17px 0; }
textarea { display: block; width: 100%; height: 128px; margin-top: 27px; border: 1px solid #858585; border-radius: 2px; padding: 2px 17px; }
::placeholder { color: #777b80; opacity: 1; letter-spacing: -.1px; }
.send { margin-top: 34px; width: 169px; height: 66px; padding: 2px 0 0; border: 0; border-radius: 5px; background: #0dcaf0; color: #fff; font: inherit; letter-spacing: -.1px; }
```
